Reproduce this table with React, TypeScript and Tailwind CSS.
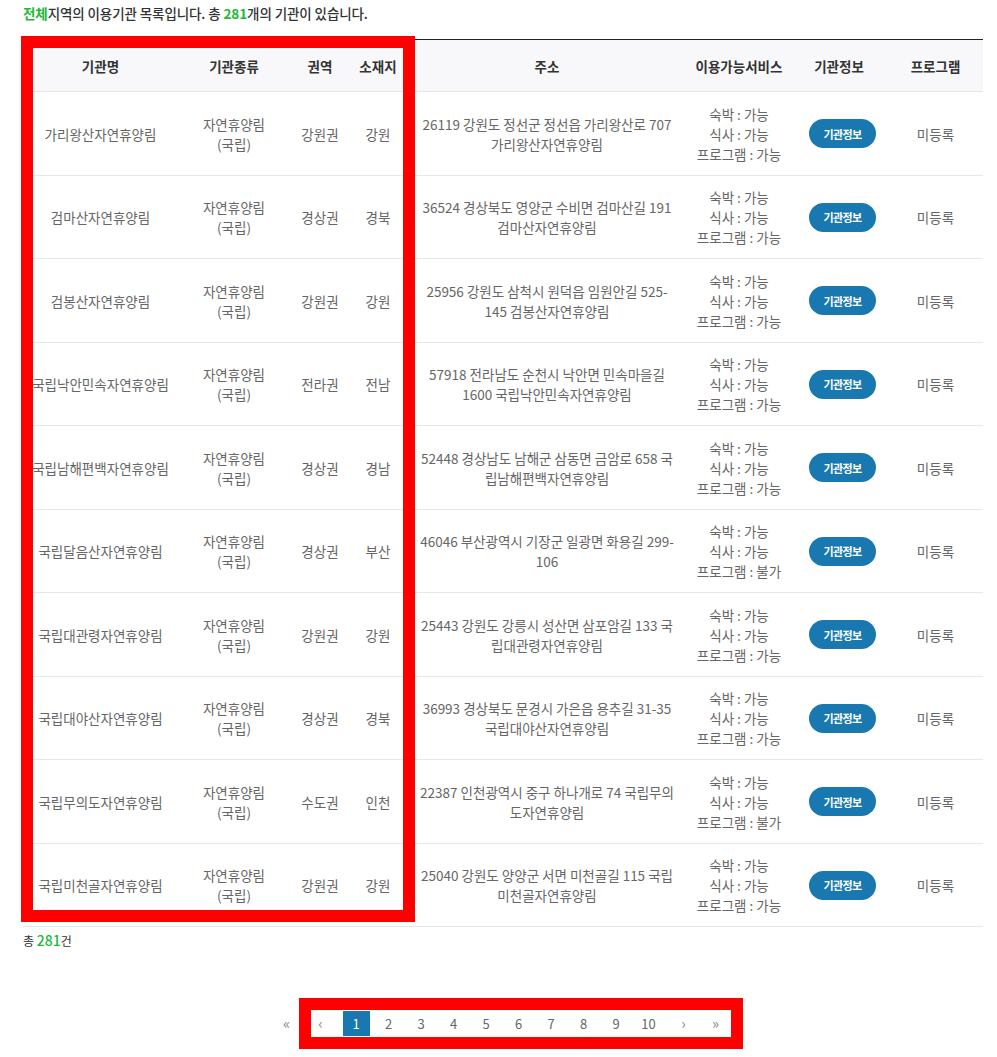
import React from "react";

type Org = {
  name: string;
  region: string;
  loc: string;
  addr: [string, string];
  program: "가능" | "불가";
};

const ORGS: Org[] = [
  { name: "가리왕산자연휴양림", region: "강원권", loc: "강원", addr: ["26119 강원도 정선군 정선읍 가리왕산로 707", "가리왕산자연휴양림"], program: "가능" },
  { name: "검마산자연휴양림", region: "경상권", loc: "경북", addr: ["36524 경상북도 영양군 수비면 검마산길 191", "검마산자연휴양림"], program: "가능" },
  { name: "검봉산자연휴양림", region: "강원권", loc: "강원", addr: ["25956 강원도 삼척시 원덕읍 임원안길 525-", "145 검봉산자연휴양림"], program: "가능" },
  { name: "국립낙안민속자연휴양림", region: "전라권", loc: "전남", addr: ["57918 전라남도 순천시 낙안면 민속마을길", "1600 국립낙안민속자연휴양림"], program: "가능" },
  { name: "국립남해편백자연휴양림", region: "경상권", loc: "경남", addr: ["52448 경상남도 남해군 삼동면 금암로 658 국", "립남해편백자연휴양림"], program: "가능" },
  { name: "국립달음산자연휴양림", region: "경상권", loc: "부산", addr: ["46046 부산광역시 기장군 일광면 화용길 299-", "106"], program: "불가" },
  { name: "국립대관령자연휴양림", region: "강원권", loc: "강원", addr: ["25443 강원도 강릉시 성산면 삼포암길 133 국", "립대관령자연휴양림"], program: "가능" },
  { name: "국립대야산자연휴양림", region: "경상권", loc: "경북", addr: ["36993 경상북도 문경시 가은읍 용추길 31-35", "국립대야산자연휴양림"], program: "가능" },
  { name: "국립무의도자연휴양림", region: "수도권", loc: "인천", addr: ["22387 인천광역시 중구 하나개로 74 국립무의", "도자연휴양림"], program: "불가" },
  { name: "국립미천골자연휴양림", region: "강원권", loc: "강원", addr: ["25040 강원도 양양군 서면 미천골길 115 국립", "미천골자연휴양림"], program: "가능" },
];

const COLS = "grid grid-cols-[155px_112px_60px_56px_282px_102px_98px_95px]";
const HEADERS = ["기관명", "기관종류", "권역", "소재지", "주소", "이용가능서비스", "기관정보", "프로그램"];
const PAGES = ["1", "2", "3", "4", "5", "6", "7", "8", "9", "10"];

function Cell({ children }: { children: React.ReactNode }) {
  return <div className="flex items-center justify-center text-center leading-[20px] whitespace-nowrap">{children}</div>;
}

function PageItem({ label, active, arrow, className = "" }: { label: string; active?: boolean; arrow?: boolean; className?: string }) {
  return (
    <span
      className={`flex h-[25px] w-[27px] shrink-0 items-center justify-center ${
        arrow ? "text-[15px] text-[#8a8a8a]" : "text-[13px]"
      } ${active ? "bg-[#1a78b0] text-white" : arrow ? "" : "text-[#666]"} ${className}`}
    >
      {label}
    </span>
  );
}

export default function App() {
  return (
    <div
      className="relative min-h-[1057px] w-full bg-white text-[13.5px] text-[#666]"
      style={{ fontFamily: '"Noto Sans CJK KR", "Noto Sans", sans-serif' }}
    >
      <div className="px-[23px] pt-[3px]">
        <p className="leading-[20px] font-medium tracking-[-0.1px] text-[#333]">
          <span className="font-bold text-[#22b83a]">전체</span>지역의 이용기관 목록입니다. 총{" "}
          <span className="font-bold text-[#22b83a]">281</span>개의 기관이 있습니다.
        </p>

        <div className="mt-[16px] w-[960px]">
          <div className={`${COLS} h-[53px] border-t border-b border-t-[#222] border-b-[#e5e5e5] bg-[#f8f8fa] font-bold text-[#333]`}>
            {HEADERS.map((h) => (
              <Cell key={h}>{h}</Cell>
            ))}
          </div>

          {ORGS.map((o, i) => (
            <div key={o.name} className={`${COLS} border-b border-[#e8e8e8] ${i % 2 === 0 ? "h-[84px]" : "h-[83px]"}`}>
              <Cell>{o.name}</Cell>
              <Cell>
                자연휴양림
                <br />
                (국립)
              </Cell>
              <Cell>{o.region}</Cell>
              <Cell>{o.loc}</Cell>
              <Cell>
                <span>
                  {o.addr[0]}
                  <br />
                  {o.addr[1]}
                </span>
              </Cell>
              <Cell>
                <span>
                  숙박 : 가능
                  <br />
                  식사 : 가능
                  <br />
                  프로그램 : {o.program}
                </span>
              </Cell>
              <Cell>
                <button className="ml-[7px] h-[29px] w-[67px] rounded-full bg-[#1a78b0] text-[11px] font-bold tracking-[-0.6px] text-white">
                  기관정보
                </button>
              </Cell>
              <Cell>미등록</Cell>
            </div>
          ))}
        </div>

        <p className="mt-[3px] leading-[20px] text-[#333]">
          <span className="text-[12px]">총 </span>
          <span className="text-[14px] font-medium text-[#22b83a]">281</span>
          <span className="text-[12px]">건</span>
        </p>
      </div>

      <div className="mt-[60px] flex pl-[273px]">
        <PageItem label="«" arrow />
        <PageItem label="‹" arrow className="ml-[7px]" />
        <div className="ml-[8.5px] flex gap-[5.5px]">
          {PAGES.map((p) => (
            <PageItem key={p} label={p} active={p === "1"} />
          ))}
        </div>
        <PageItem label="›" arrow className="ml-[8px]" />
        <PageItem label="»" arrow className="ml-[5px]" />
      </div>

      {/* annotation boxes */}
      <div className="pointer-events-none absolute left-[21px] top-[36px] h-[886px] w-[394px] border-[12px] border-[#ff0000]" />
      <div className="pointer-events-none absolute left-[299px] top-[998px] h-[51px] w-[444px] border-[12px] border-[#ff0000]" />
    </div>
  );
}
